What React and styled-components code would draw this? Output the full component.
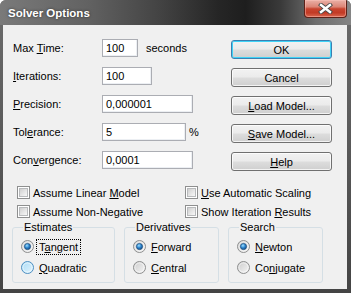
import React from "react";
import styled, { createGlobalStyle } from "styled-components";

const Global = createGlobalStyle`
  html, body { margin: 0; padding: 0; background: #fff; }
  body { width: 351px; height: 293px; overflow: hidden; }
  * { box-sizing: border-box; }
`;

const Window = styled.div`
  width: 351px;
  height: 293px;
  display: flex;
  flex-direction: column;
  background: linear-gradient(180deg, #6c6c6c 0%, #555 60%, #444 100%);
  border-radius: 6px 6px 0 0;
  overflow: hidden;
  font-family: "Liberation Sans", Arial, sans-serif;
  font-size: 11px;
  color: #000;
`;

const TitleBar = styled.div`
  height: 25px;
  flex: none;
  display: flex;
  align-items: center;
  justify-content: space-between;
  padding-left: 8px;
  background: linear-gradient(
    90deg,
    #7a7a7a 0%,
    #626262 25%,
    #444 45%,
    #262626 62%,
    #1e1e1e 70%,
    #3a3a3a 80%,
    #6e6e6e 90%,
    #858585 100%
  );
`;

const Title = styled.span`
  font-family: "Liberation Sans", Arial, sans-serif;
  font-weight: bold;
  font-size: 11.5px;
  color: #fff;
  text-shadow: 0 0 3px rgba(0, 0, 0, 0.6);
`;

const CloseButton = styled.div`
  align-self: flex-start;
  width: 43px;
  height: 18px;
  margin-right: 4px;
  display: flex;
  align-items: center;
  justify-content: center;
  border: 1px solid #5e2118;
  border-top: none;
  border-radius: 0 0 4px 4px;
  background: linear-gradient(
    180deg,
    #eab1a7 0%,
    #dc8576 40%,
    #c8442f 52%,
    #c23a25 75%,
    #d9674f 100%
  );
  box-shadow: inset 0 0 0 1px rgba(255, 200, 190, 0.45);
`;

const Client = styled.div`
  flex: 1;
  margin: 0 4px 4px 3px;
  background: #f0f0f0;
  display: flex;
  flex-direction: column;
  padding-top: 14px;
`;

const Top = styled.div`
  display: flex;
  align-items: flex-start;
`;

const FormCol = styled.div`
  margin-left: 10px;
  display: flex;
  flex-direction: column;
  gap: 10px;
`;

const FormRow = styled.div`
  height: 18px;
  display: flex;
  align-items: center;
`;

const Label = styled.span`
  width: 89px;
  flex: none;
`;

const Input = styled.div`
  width: ${(p) => p.$w}px;
  height: 18px;
  border: 1px solid #abadb3;
  background: #fff;
  box-shadow: inset -1px -1px 0 #eceff3;
  padding-left: 3px;
  display: flex;
  align-items: center;
`;

const Suffix = styled.span`
  margin-left: ${(p) => p.$gap}px;
`;

const ButtonCol = styled.div`
  margin-left: auto;
  margin-right: 15px;
  padding-top: 1px;
  display: flex;
  flex-direction: column;
  gap: 9px;
`;

const Button = styled.div`
  width: 101px;
  height: 19px;
  display: flex;
  align-items: center;
  justify-content: center;
  border: 1px solid ${(p) => (p.$default ? "#3c7fb1" : "#707070")};
  border-radius: 3px;
  background: linear-gradient(
    180deg,
    #f2f2f2 0%,
    #ebebeb 48%,
    #dddddd 52%,
    #cfcfcf 100%
  );
  box-shadow: inset 0 0 0 1px
    ${(p) => (p.$default ? "#3fd3f7" : "rgba(255,255,255,0.75)")};
`;

const Key = styled.span`
  text-decoration: underline;
  text-underline-offset: 1px;
`;

const Checks = styled.div`
  margin-top: 12px;
  margin-left: 14px;
  display: grid;
  grid-template-columns: 168px 1fr;
  grid-auto-rows: 19px;
`;

const CheckItem = styled.label`
  display: flex;
  align-items: center;
  gap: 3px;
`;

const CheckBox = styled.span`
  width: 13px;
  height: 13px;
  flex: none;
  border: 1px solid #8e8f8f;
  background: #fff;
  padding: 1px;
  display: flex;
  &::after {
    content: "";
    flex: 1;
    border: 1px solid #b8babc;
    background: linear-gradient(135deg, #cfcfcf 0%, #e6e6e6 55%, #f7f7f7 100%);
  }
`;

const Groups = styled.div`
  margin-left: 9px;
  display: flex;
  gap: 9px;
`;

const Group = styled.fieldset`
  margin: 0;
  width: ${(p) => p.$w}px;
  border: 1px solid #d5dfe5;
  border-radius: 3px;
  padding: 2px 0 4px 8px;
  display: flex;
  flex-direction: column;
`;

const Legend = styled.legend`
  padding: 0 1px;
  margin-left: 2px;
  line-height: 13px;
  font-size: 11px;
`;

const RadioRow = styled.label`
  height: 21px;
  display: flex;
  align-items: center;
  gap: 5px;
`;

const RadioText = styled.span`
  line-height: 14px;
  ${(p) =>
    p.$focus
      ? `border: 1px dotted #000; padding: 0 2px 0 2px; margin-left: -3px;`
      : ``}
`;

const RadioIcon = ({ checked, hover }) => (
  <svg width="13" height="13" viewBox="0 0 13 13" style={{ flex: "none" }}>
    <defs>
      <linearGradient id="rn" x1="0" y1="0" x2="1" y2="1">
        <stop offset="0" stopColor="#cbcbcb" />
        <stop offset="1" stopColor="#f7f7f7" />
      </linearGradient>
      <linearGradient id="rh" x1="0" y1="0" x2="1" y2="1">
        <stop offset="0" stopColor="#a9dcf7" />
        <stop offset="1" stopColor="#e4f4fd" />
      </linearGradient>
      <radialGradient id="rc" cx="0.4" cy="0.35" r="0.7">
        <stop offset="0" stopColor="#9ee0ff" />
        <stop offset="0.5" stopColor="#2f86cf" />
        <stop offset="1" stopColor="#124a82" />
      </radialGradient>
    </defs>
    <circle
      cx="6.5"
      cy="6.5"
      r="6"
      fill={hover ? "url(#rh)" : "url(#rn)"}
      stroke={hover ? "#4f8fc0" : "#8e8f8f"}
      strokeWidth="1"
    />
    <circle cx="6.5" cy="6.5" r="4.6" fill="none" stroke="#fff" strokeOpacity="0.7" strokeWidth="0.8" />
    {checked && (
      <circle cx="6.5" cy="6.5" r="3.1" fill="url(#rc)" stroke="#1a4c7c" strokeWidth="0.7" />
    )}
  </svg>
);

const CloseIcon = () => (
  <svg width="15" height="11" viewBox="0 0 15 11">
    <path d="M3 2 L12 9 M12 2 L3 9" stroke="#4a4a4a" strokeWidth="4.2" strokeLinecap="square" />
    <path d="M3 2 L12 9 M12 2 L3 9" stroke="#fff" strokeWidth="2.4" strokeLinecap="square" />
  </svg>
);

const Radio = ({ checked, hover, focus, children }) => (
  <RadioRow>
    <RadioIcon checked={checked} hover={hover} />
    <RadioText $focus={focus}>{children}</RadioText>
  </RadioRow>
);

const Check = ({ children }) => (
  <CheckItem>
    <CheckBox />
    <span>{children}</span>
  </CheckItem>
);

export default function App() {
  return (
    <>
      <Global />
      <Window>
        <TitleBar>
          <Title>Solver Options</Title>
          <CloseButton>
            <CloseIcon />
          </CloseButton>
        </TitleBar>
        <Client>
          <Top>
            <FormCol>
              <FormRow>
                <Label>
                  Max <Key>T</Key>ime:
                </Label>
                <Input $w={36}>100</Input>
                <Suffix $gap={8}>seconds</Suffix>
              </FormRow>
              <FormRow>
                <Label>
                  <Key>I</Key>terations:
                </Label>
                <Input $w={50}>100</Input>
              </FormRow>
              <FormRow>
                <Label>
                  <Key>P</Key>recision:
                </Label>
                <Input $w={91}>0,000001</Input>
              </FormRow>
              <FormRow>
                <Label>
                  Tol<Key>e</Key>rance:
                </Label>
                <Input $w={84}>5</Input>
                <Suffix $gap={3}>%</Suffix>
              </FormRow>
              <FormRow>
                <Label>
                  Con<Key>v</Key>ergence:
                </Label>
                <Input $w={91}>0,0001</Input>
              </FormRow>
            </FormCol>
            <ButtonCol>
              <Button $default>OK</Button>
              <Button>Cancel</Button>
              <Button>
                <Key>L</Key>oad Model...
              </Button>
              <Button>
                <Key>S</Key>ave Model...
              </Button>
              <Button>
                <Key>H</Key>elp
              </Button>
            </ButtonCol>
          </Top>
          <Checks>
            <Check>
              Assume Linear <Key>M</Key>odel
            </Check>
            <Check>
              <Key>U</Key>se Automatic Scaling
            </Check>
            <Check>
              Assume Non-Ne<Key>g</Key>ative
            </Check>
            <Check>
              Show Iteration <Key>R</Key>esults
            </Check>
          </Checks>
          <Groups>
            <Group $w={103}>
              <Legend>Estimates</Legend>
              <Radio checked focus>
                T<Key>a</Key>ngent
              </Radio>
              <Radio hover>
                <Key>Q</Key>uadratic
              </Radio>
            </Group>
            <Group $w={95}>
              <Legend>Derivatives</Legend>
              <Radio checked>
                <Key>F</Key>orward
              </Radio>
              <Radio>
                <Key>C</Key>entral
              </Radio>
            </Group>
            <Group $w={95}>
              <Legend>Search</Legend>
              <Radio checked>
                <Key>N</Key>ewton
              </Radio>
              <Radio>
                Co<Key>n</Key>jugate
              </Radio>
            </Group>
          </Groups>
        </Client>
      </Window>
    </>
  );
}
